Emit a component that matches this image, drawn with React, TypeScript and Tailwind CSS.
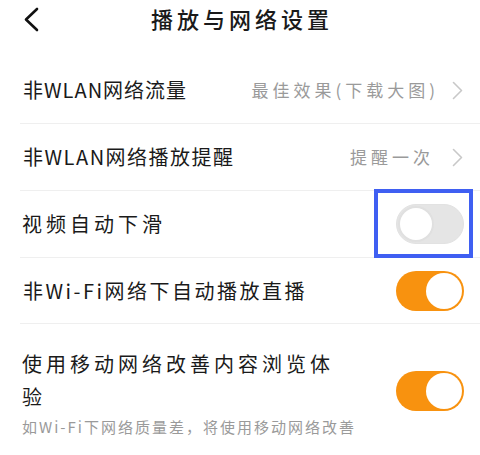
import React from "react";

const font = { fontFamily: '"Noto Sans CJK SC", "Noto Sans", sans-serif' };

function Chevron() {
  return (
    <svg width="11" height="19" viewBox="0 0 11 19" className="shrink-0">
      <path d="M1.5 1.5 L9.5 9.5 L1.5 17.5" fill="none" stroke="#c8c8c8" strokeWidth="1.6" strokeLinecap="round" strokeLinejoin="round" />
    </svg>
  );
}

function Toggle({ on }: { on: boolean }) {
  if (on) {
    return (
      <div className="w-[68px] h-[40px] rounded-full bg-[#f8920f] flex items-center justify-end pr-[2px] shrink-0">
        <div className="w-[36px] h-[36px] rounded-full bg-white" />
      </div>
    );
  }
  return (
    <div className="w-[68px] h-[40px] rounded-full bg-[#e5e5e5] border border-[#e2e2e2] flex items-center pl-[1px] shrink-0">
      <div className="w-[36px] h-[36px] rounded-full bg-white border-2 border-[#e0e0e0]" />
    </div>
  );
}

export default function App() {
  return (
    <div className="w-[480px] h-[455px] bg-white overflow-hidden text-[#1a1a1a]" style={font}>
      <div className="h-[57px] relative flex justify-center pt-[3px]">
        <svg width="16" height="25" viewBox="0 0 16 25" className="absolute left-[23px] top-[7px]">
          <path d="M14 2 L3 12.5 L14 23" fill="none" stroke="#111" strokeWidth="2.6" strokeLinecap="round" strokeLinejoin="round" />
        </svg>
        <div className="text-[22px] leading-[30px] tracking-[4px] font-medium pl-[4px]">播放与网络设置</div>
      </div>

      <div className="ml-[20px] h-[67px] border-b border-[#efefef] flex items-center pr-[17px] pl-[3px]">
        <div className="text-[20px] tracking-[1px] flex-1">非WLAN网络流量</div>
        <div className="text-[17px] tracking-[4px] text-[#9a9a9a] mr-[13px]">最佳效果(下载大图)</div>
        <Chevron />
      </div>

      <div className="ml-[20px] h-[67px] border-b border-[#efefef] flex items-center pr-[17px] pl-[3px]">
        <div className="text-[20px] tracking-[1.5px] flex-1">非WLAN网络播放提醒</div>
        <div className="text-[17px] tracking-[4px] text-[#9a9a9a] mr-[18px]">提醒一次</div>
        <Chevron />
      </div>

      <div className="ml-[20px] h-[67px] border-b border-[#efefef] flex items-center pr-[16px] pl-[2px]">
        <div className="text-[20px] tracking-[4px] flex-1">视频自动下滑</div>
        <div className="relative">
          <Toggle on={false} />
          <span className="absolute -left-[22px] -right-[9px] -top-[15px] -bottom-[14px] border-[4px] border-[#3f5ff2]" />
        </div>
      </div>

      <div className="ml-[20px] h-[66px] border-b border-[#efefef] flex items-center pr-[16px] pl-[3px]">
        <div className="text-[20px] tracking-[2.5px] flex-1">非Wi-Fi网络下自动播放直播</div>
        <Toggle on={true} />
      </div>

      <div className="ml-[20px] flex items-start pr-[16px] pl-[2px] pt-[23px]">
        <div className="flex-1">
          <div className="w-[330px] text-[20px] leading-[33px] tracking-[4px]">使用移动网络改善内容浏览体验</div>
          <div className="mt-[3px] text-[15px] leading-[22px] tracking-[2px] text-[#9a9a9a]">如Wi-Fi下网络质量差，将使用移动网络改善</div>
        </div>
        <div className="mt-[24px]">
          <Toggle on={true} />
        </div>
      </div>
    </div>
  );
}
